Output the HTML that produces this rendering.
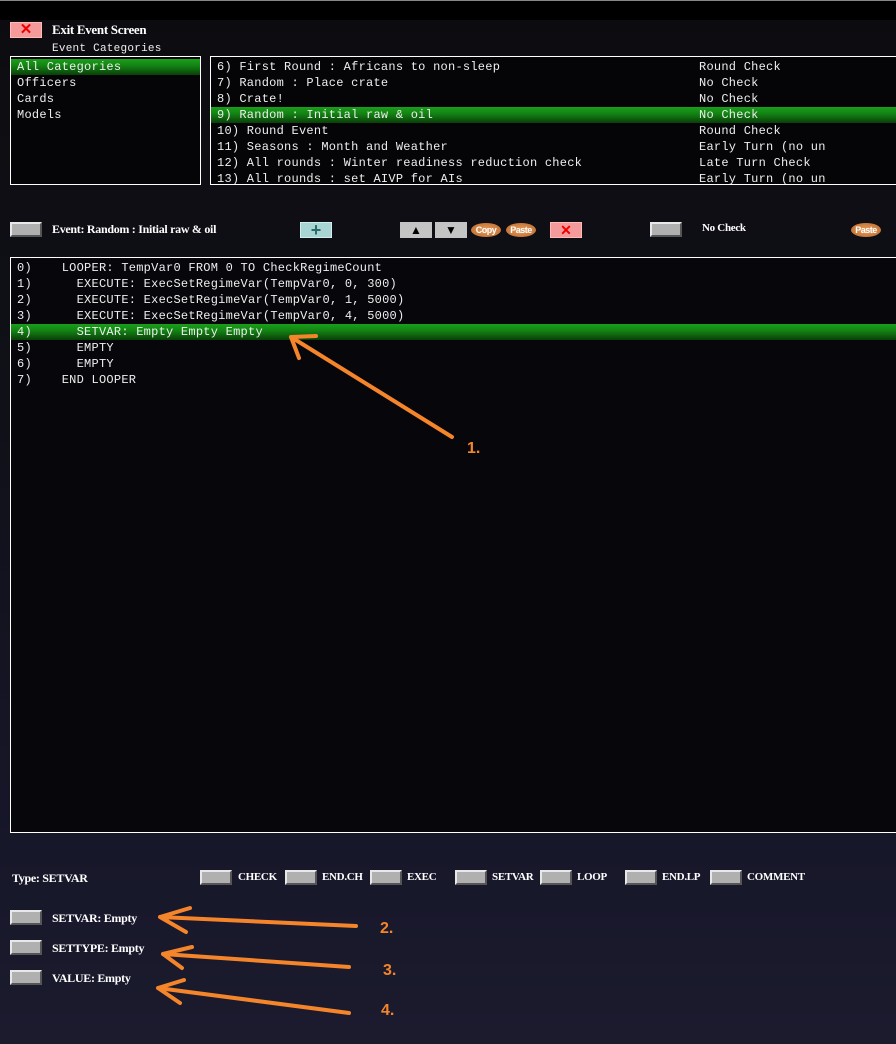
<!DOCTYPE html>
<html><head><meta charset="utf-8"><style>
*{margin:0;padding:0;box-sizing:border-box}
body{width:896px;height:1044px;overflow:hidden;position:relative;background:linear-gradient(180deg,#0c0c10 0px,#101018 400px,#17172a 850px,#1c1b2e 1044px);font-family:"Liberation Serif",serif;color:#fff}
.abs{position:absolute}
.mono{font-family:"Liberation Mono",monospace;font-size:12px;line-height:16px;white-space:pre;color:#eee;letter-spacing:0.25px}
.b{font-weight:bold;font-size:12px;letter-spacing:-0.3px}
.btn{position:absolute;width:32px;height:15px;background:#b0b0b0;border-top:2px solid #e8e8e8;border-left:2px solid #e8e8e8;border-right:2px solid #555;border-bottom:2px solid #555}
.box{position:absolute;border:1px solid #fff;background:#050507}
.sel{background:linear-gradient(180deg,#1aa01a 0%,#128012 45%,#0a3e0a 100%)}
.oval{position:absolute;width:30px;height:14px;border-radius:50%;background:radial-gradient(#e8a060,#b8652a);color:#fff;font-size:9px;font-weight:bold;text-align:center;line-height:14px;font-family:"Liberation Sans",sans-serif;letter-spacing:-0.5px}
.x{position:absolute;background:#f59a9a;border:1px solid #ffbaba;color:#e00;text-align:center;font-family:"Liberation Sans",sans-serif;font-weight:bold}
</style></head><body>
<div class="abs" style="left:0;top:0;width:896px;height:20px;background:#000;border-top:1px solid #888"></div>

<div class="x" style="left:10px;top:22px;width:32px;height:16px;font-size:15px;line-height:14px">✕</div>
<div class="abs b" style="left:52px;top:22px;font-size:13px">Exit Event Screen</div>
<div class="abs mono" style="left:52px;top:41px;font-size:11px">Event Categories</div>

<div class="box" style="left:10px;top:56px;width:191px;height:129px">
<div class="mono sel" style="padding-left:6px;margin-top:2px">All Categories</div>
<div class="mono" style="padding-left:6px">Officers
Cards
Models</div>
</div>

<div class="box" style="left:210px;top:56px;width:690px;height:129px;overflow:hidden;border-right:none">
<div style="margin-top:2px">
<div class="mono" style="padding-left:6px;position:relative">6) First Round : Africans to non-sleep<span class="abs" style="left:488px">Round Check</span></div>
<div class="mono" style="padding-left:6px;position:relative">7) Random : Place crate<span class="abs" style="left:488px">No Check</span></div>
<div class="mono" style="padding-left:6px;position:relative">8) Crate!<span class="abs" style="left:488px">No Check</span></div>
<div class="mono sel" style="padding-left:6px;position:relative">9) Random : Initial raw &amp; oil<span class="abs" style="left:488px">No Check</span></div>
<div class="mono" style="padding-left:6px;position:relative">10) Round Event<span class="abs" style="left:488px">Round Check</span></div>
<div class="mono" style="padding-left:6px;position:relative">11) Seasons : Month and Weather<span class="abs" style="left:488px">Early Turn (no un</span></div>
<div class="mono" style="padding-left:6px;position:relative">12) All rounds : Winter readiness reduction check<span class="abs" style="left:488px">Late Turn Check</span></div>
<div class="mono" style="padding-left:6px;position:relative">13) All rounds : set AIVP for AIs<span class="abs" style="left:488px">Early Turn (no un</span></div>
</div></div>

<div class="btn" style="left:10px;top:222px"></div>
<div class="abs b" style="left:52px;top:222px">Event: Random : Initial raw &amp; oil</div>
<div class="abs" style="left:300px;top:222px;width:32px;height:16px;background:#a8d4d4;border:1px solid #d0eeee;color:#2a6a6a;font:bold 18px/14px 'Liberation Sans',sans-serif;text-align:center">+</div>
<div class="abs" style="left:400px;top:222px;width:32px;height:16px;background:#c4c4c4;text-align:center;font-size:12px;line-height:16px;color:#000">▲</div>
<div class="abs" style="left:435px;top:222px;width:32px;height:16px;background:#c4c4c4;text-align:center;font-size:12px;line-height:16px;color:#000">▼</div>
<div class="oval" style="left:471px;top:223px">Copy</div>
<div class="oval" style="left:506px;top:223px">Paste</div>
<div class="x" style="left:550px;top:222px;width:32px;height:16px;font-size:14px;line-height:14px">✕</div>
<div class="btn" style="left:650px;top:222px"></div>
<div class="abs b" style="left:702px;top:222px;font-size:11px">No Check</div>
<div class="oval" style="left:851px;top:223px">Paste</div>

<div class="box" style="left:10px;top:257px;width:890px;height:576px;background:#07070b;border-right:none">
<div class="mono" style="margin-top:2px;padding-left:6px">0)    LOOPER: TempVar0 FROM 0 TO CheckRegimeCount
1)      EXECUTE: ExecSetRegimeVar(TempVar0, 0, 300)
2)      EXECUTE: ExecSetRegimeVar(TempVar0, 1, 5000)
3)      EXECUTE: ExecSetRegimeVar(TempVar0, 4, 5000)</div>
<div class="mono sel" style="padding-left:6px">4)      SETVAR: Empty Empty Empty</div>
<div class="mono" style="padding-left:6px">5)      EMPTY
6)      EMPTY
7)    END LOOPER</div>
</div>

<div class="abs b" style="left:12px;top:871px">Type: SETVAR</div>
<div class="btn" style="left:200px;top:870px"></div><div class="abs b" style="left:238px;top:871px;font-size:11px">CHECK</div>
<div class="btn" style="left:285px;top:870px"></div><div class="abs b" style="left:322px;top:871px;font-size:11px">END.CH</div>
<div class="btn" style="left:370px;top:870px"></div><div class="abs b" style="left:407px;top:871px;font-size:11px">EXEC</div>
<div class="btn" style="left:455px;top:870px"></div><div class="abs b" style="left:492px;top:871px;font-size:11px">SETVAR</div>
<div class="btn" style="left:540px;top:870px"></div><div class="abs b" style="left:577px;top:871px;font-size:11px">LOOP</div>
<div class="btn" style="left:625px;top:870px"></div><div class="abs b" style="left:662px;top:871px;font-size:11px">END.LP</div>
<div class="btn" style="left:710px;top:870px"></div><div class="abs b" style="left:747px;top:871px;font-size:11px">COMMENT</div>

<div class="btn" style="left:10px;top:910px"></div><div class="abs b" style="left:52px;top:911px">SETVAR: Empty</div>
<div class="btn" style="left:10px;top:940px"></div><div class="abs b" style="left:52px;top:941px">SETTYPE: Empty</div>
<div class="btn" style="left:10px;top:970px"></div><div class="abs b" style="left:52px;top:971px">VALUE: Empty</div>

<svg class="abs" style="left:0;top:0" width="896" height="1044">
<g stroke="#f5852a" stroke-width="4" fill="none" stroke-linecap="round" stroke-linejoin="round">
<path d="M452 437 L291 337 M291 337 L316 336 M291 337 L299 358"/>
<path d="M356 926 L160 917 M160 917 L190 908 M160 917 L186 932"/>
<path d="M349 967 L163 954 M163 954 L192 947 M163 954 L182 968"/>
<path d="M349 1013 L158 988 M158 988 L184 980 M158 988 L180 1003"/>
</g>
<g fill="#f5852a" font-family="Liberation Sans,sans-serif" font-weight="bold" font-size="16">
<text x="467" y="453">1.</text>
<text x="380" y="933">2.</text>
<text x="383" y="975">3.</text>
<text x="381" y="1015">4.</text>
</g>
</svg>
</body></html>
